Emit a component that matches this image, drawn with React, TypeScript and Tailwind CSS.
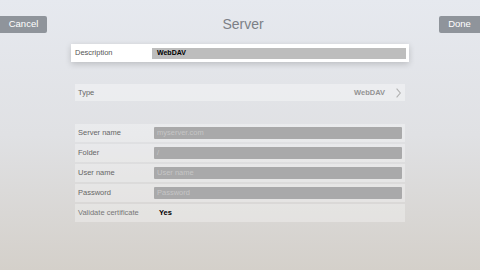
const fields = [
  { label: 'Server name', placeholder: 'myserver.com' },
  { label: 'Folder', placeholder: '/' },
  { label: 'User name', placeholder: 'User name' },
  { label: 'Password', placeholder: 'Password' },
];

export default function App() {
  return (
    <div
      className="w-[480px] h-[270px] overflow-hidden bg-gradient-to-b from-[#e6e9ef] via-[#e0e1e4] to-[#d4d0ca] pt-4"
      style={{ fontFamily: '"Liberation Sans", Arial, sans-serif' }}
    >
      {/* Header */}
      <div className="flex items-center justify-between h-[17px]">
        <div className="w-[47px] h-[17px] bg-[#8f949b] rounded-r-[2px] flex items-center justify-center text-white text-[9.5px]">
          Cancel
        </div>
        <div className="text-[14px] text-[#7c7f86]">Server</div>
        <div className="w-[41px] h-[17px] bg-[#8f949b] rounded-l-[2px] flex items-center justify-center text-white text-[9.5px]">
          Done
        </div>
      </div>

      {/* Description card */}
      <div className="ml-[71px] mt-[11px] w-[338px] h-[18px] bg-white shadow-[0_2px_6px_rgba(0,0,0,0.18)] flex items-center pl-1 pr-[3px]">
        <span className="w-[77px] text-[7.5px] text-[#555]">Description</span>
        <div className="flex-1 h-[11px] bg-[#bdbdbd] flex items-center pl-[5px] text-[7px] font-bold text-black">
          WebDAV
        </div>
      </div>

      {/* Type row */}
      <div className="ml-[75px] mt-[22px] w-[330px] h-[17px] bg-white/35 flex items-center pl-[3px] pr-[4px]">
        <span className="flex-1 text-[7.5px] text-[#666]">Type</span>
        <span className="text-[7.5px] font-bold text-[#939393]">WebDAV</span>
        <svg className="ml-[11px]" width="5" height="10" viewBox="0 0 5 10" fill="none">
          <path d="M0.6 0.6 L4.3 5 L0.6 9.4" stroke="#b0b0b0" strokeWidth="1.1" />
        </svg>
      </div>

      {/* Server fields */}
      <div className="ml-[75px] mt-[23px] w-[330px] flex flex-col gap-[2px]">
        {fields.map((f) => (
          <div key={f.label} className="h-[18px] bg-white/30 flex items-center pl-[3px] pr-[3px]">
            <span className="w-[76px] text-[7.5px] text-[#666]">{f.label}</span>
            <div className="flex-1 h-[12px] bg-[#a9a9aa] rounded-[1px] flex items-center pl-[3px] text-[7.5px] text-[#c6c6c6]">
              {f.placeholder}
            </div>
          </div>
        ))}
        <div className="h-[18px] bg-white/30 flex items-center pl-[3px]">
          <span className="w-[81px] text-[7.5px] text-[#777]">Validate certificate</span>
          <span className="text-[7.5px] font-bold text-black">Yes</span>
        </div>
      </div>
    </div>
  );
}
